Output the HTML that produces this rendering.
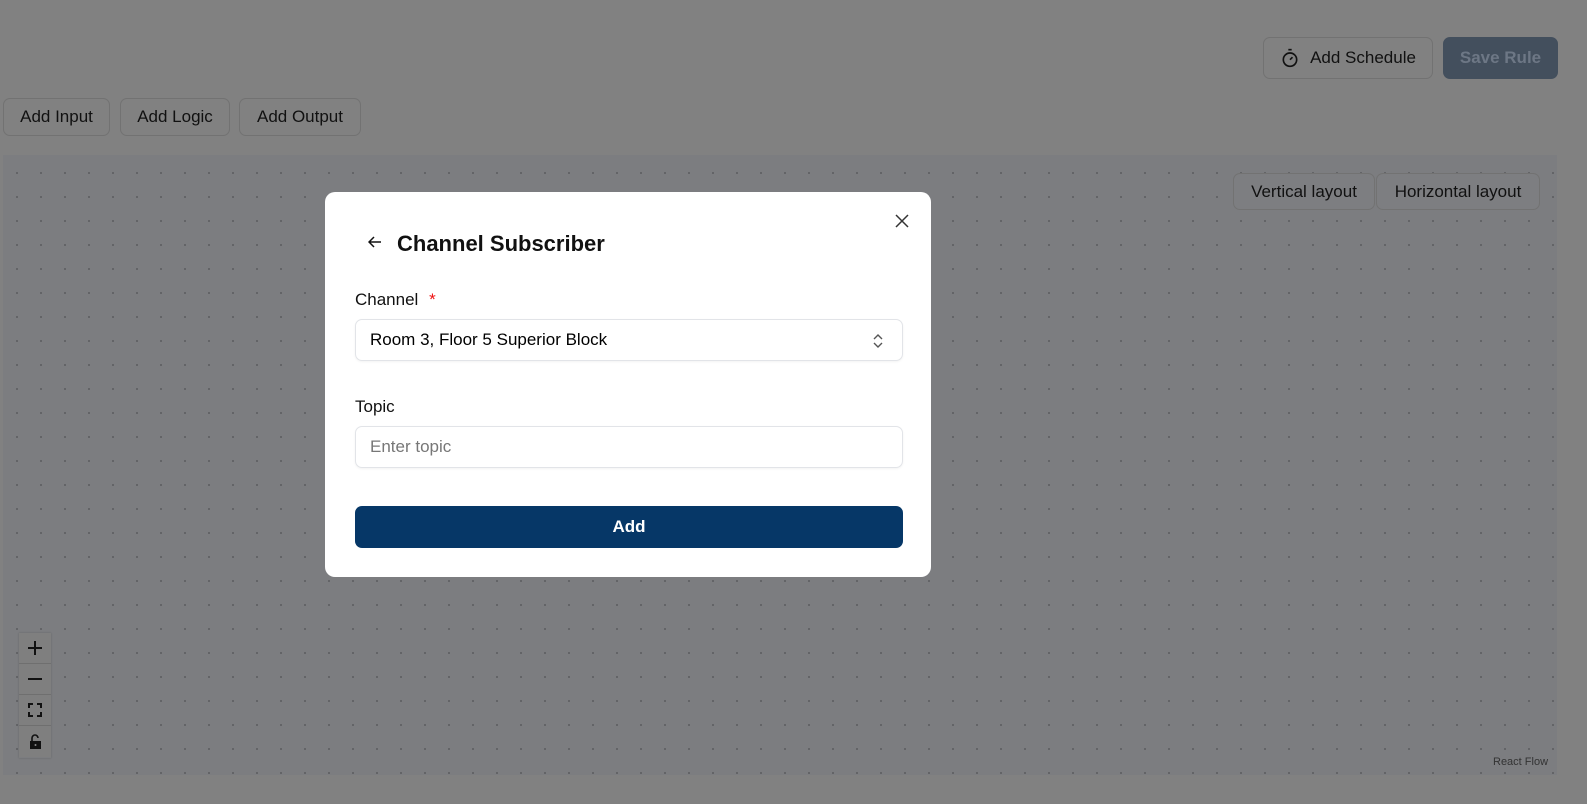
<!DOCTYPE html>
<html><head><style>
*{box-sizing:border-box;margin:0;padding:0}
body{width:1587px;height:804px;overflow:hidden;background:#818181;font-family:"Liberation Sans",sans-serif;position:relative}
.btn{position:absolute;border:1px solid #727272;border-radius:7px;background:#818181;color:#111;font-size:17px;display:flex;align-items:center;justify-content:center}
.canvas{position:absolute;left:3px;top:155px;width:1554px;height:620px;background-color:#7c7d80;background-image:radial-gradient(circle,#5e5f62 0.8px,transparent 1.2px);background-size:24px 24px;background-position:2px 6px}
.modal{position:absolute;left:325px;top:192px;width:606px;height:385px;background:#fff;border-radius:10px}
.lbl{position:absolute;left:30px;font-size:17px;color:#111}
.inp{position:absolute;left:30px;width:548px;height:42px;border:1px solid #e2e4e8;border-radius:7px;font-size:17px;padding-left:14px;display:flex;align-items:center;box-shadow:0 1px 2px rgba(0,0,0,.05)}
.ctl{position:absolute;left:19px;width:32px;height:31px;background:#7f7f7f;border-bottom:1px solid #6f6f6f;display:flex;align-items:center;justify-content:center}
</style></head><body>
<div class="btn" style="left:1263px;top:37px;width:170px;height:42px"><svg width="20" height="20" viewBox="0 0 24 24" fill="none" stroke="#111" stroke-width="2" style="margin-right:10px"><line x1="10" y1="2" x2="14" y2="2"/><line x1="12" y1="14" x2="15" y2="11"/><circle cx="12" cy="14" r="8"/></svg>Add Schedule</div>
<div class="btn" style="left:1443px;top:37px;width:115px;height:42px;background:#434f5d;border-color:#434f5d;color:#6d7785;font-weight:bold">Save Rule</div>
<div class="btn" style="left:3px;top:98px;width:107px;height:38px">Add Input</div>
<div class="btn" style="left:120px;top:98px;width:110px;height:38px">Add Logic</div>
<div class="btn" style="left:239px;top:98px;width:122px;height:38px">Add Output</div>
<div class="canvas"></div>
<div class="btn" style="left:1233px;top:173px;width:142px;height:37px;background:#7d7e81">Vertical layout</div>
<div class="btn" style="left:1376px;top:173px;width:164px;height:37px;background:#7d7e81">Horizontal layout</div>
<div style="position:absolute;left:19px;top:633px;width:32px;height:125px;box-shadow:0 0 2px rgba(0,0,0,.2)"></div>
<div class="ctl" style="top:633px"><svg width="16" height="16" viewBox="0 0 16 16" stroke="#111" stroke-width="2"><path d="M8 1v14M1 8h14"/></svg></div>
<div class="ctl" style="top:664px"><svg width="16" height="16" viewBox="0 0 16 16" stroke="#111" stroke-width="2"><path d="M1 8h14"/></svg></div>
<div class="ctl" style="top:695px"><svg width="14" height="14" viewBox="0 0 14 14" fill="none" stroke="#111" stroke-width="2"><path d="M1 5V1h4M9 1h4v4M13 9v4H9M5 13H1V9"/></svg></div>
<div class="ctl" style="top:726px;border:none"><svg width="14" height="16" viewBox="0 0 14 16"><path d="M4 7V4a3 3 0 0 1 6 0" fill="none" stroke="#111" stroke-width="1.6"/><rect x="2" y="7" width="11" height="8" fill="#111"/><circle cx="7.5" cy="11" r="1" fill="#888"/></svg></div>
<div style="position:absolute;left:1493px;top:756px;font-size:11px;color:#333">React Flow</div>
<div class="modal">
<svg style="position:absolute;left:570px;top:22px" width="14" height="14" viewBox="0 0 14 14" stroke="#333" stroke-width="1.5"><path d="M1 1l12 12M13 1L1 13"/></svg>
<svg style="position:absolute;left:43px;top:43px" width="14" height="14" viewBox="0 0 14 14" fill="none" stroke="#111" stroke-width="1.5"><path d="M13 7H1M6 2L1 7l5 5"/></svg>
<div style="position:absolute;left:72px;top:39px;font-size:22px;font-weight:bold;color:#111">Channel Subscriber</div>
<div class="lbl" style="top:98px">Channel <span style="color:#e11;margin-left:6px">*</span></div>
<div class="inp" style="top:127px">Room 3, Floor 5 Superior Block
<svg style="position:absolute;right:18px;top:13px" width="12" height="16" viewBox="0 0 12 16" fill="none" stroke="#555" stroke-width="1.4"><path d="M2 6l4-4 4 4M2 10l4 4 4-4"/></svg></div>
<div class="lbl" style="top:205px">Topic</div>
<div class="inp" style="top:234px;color:#777">Enter topic</div>
<div style="position:absolute;left:30px;top:314px;width:548px;height:42px;background:#063767;border-radius:7px;color:#fff;font-weight:bold;font-size:17px;display:flex;align-items:center;justify-content:center">Add</div>
</div>
</body></html>
